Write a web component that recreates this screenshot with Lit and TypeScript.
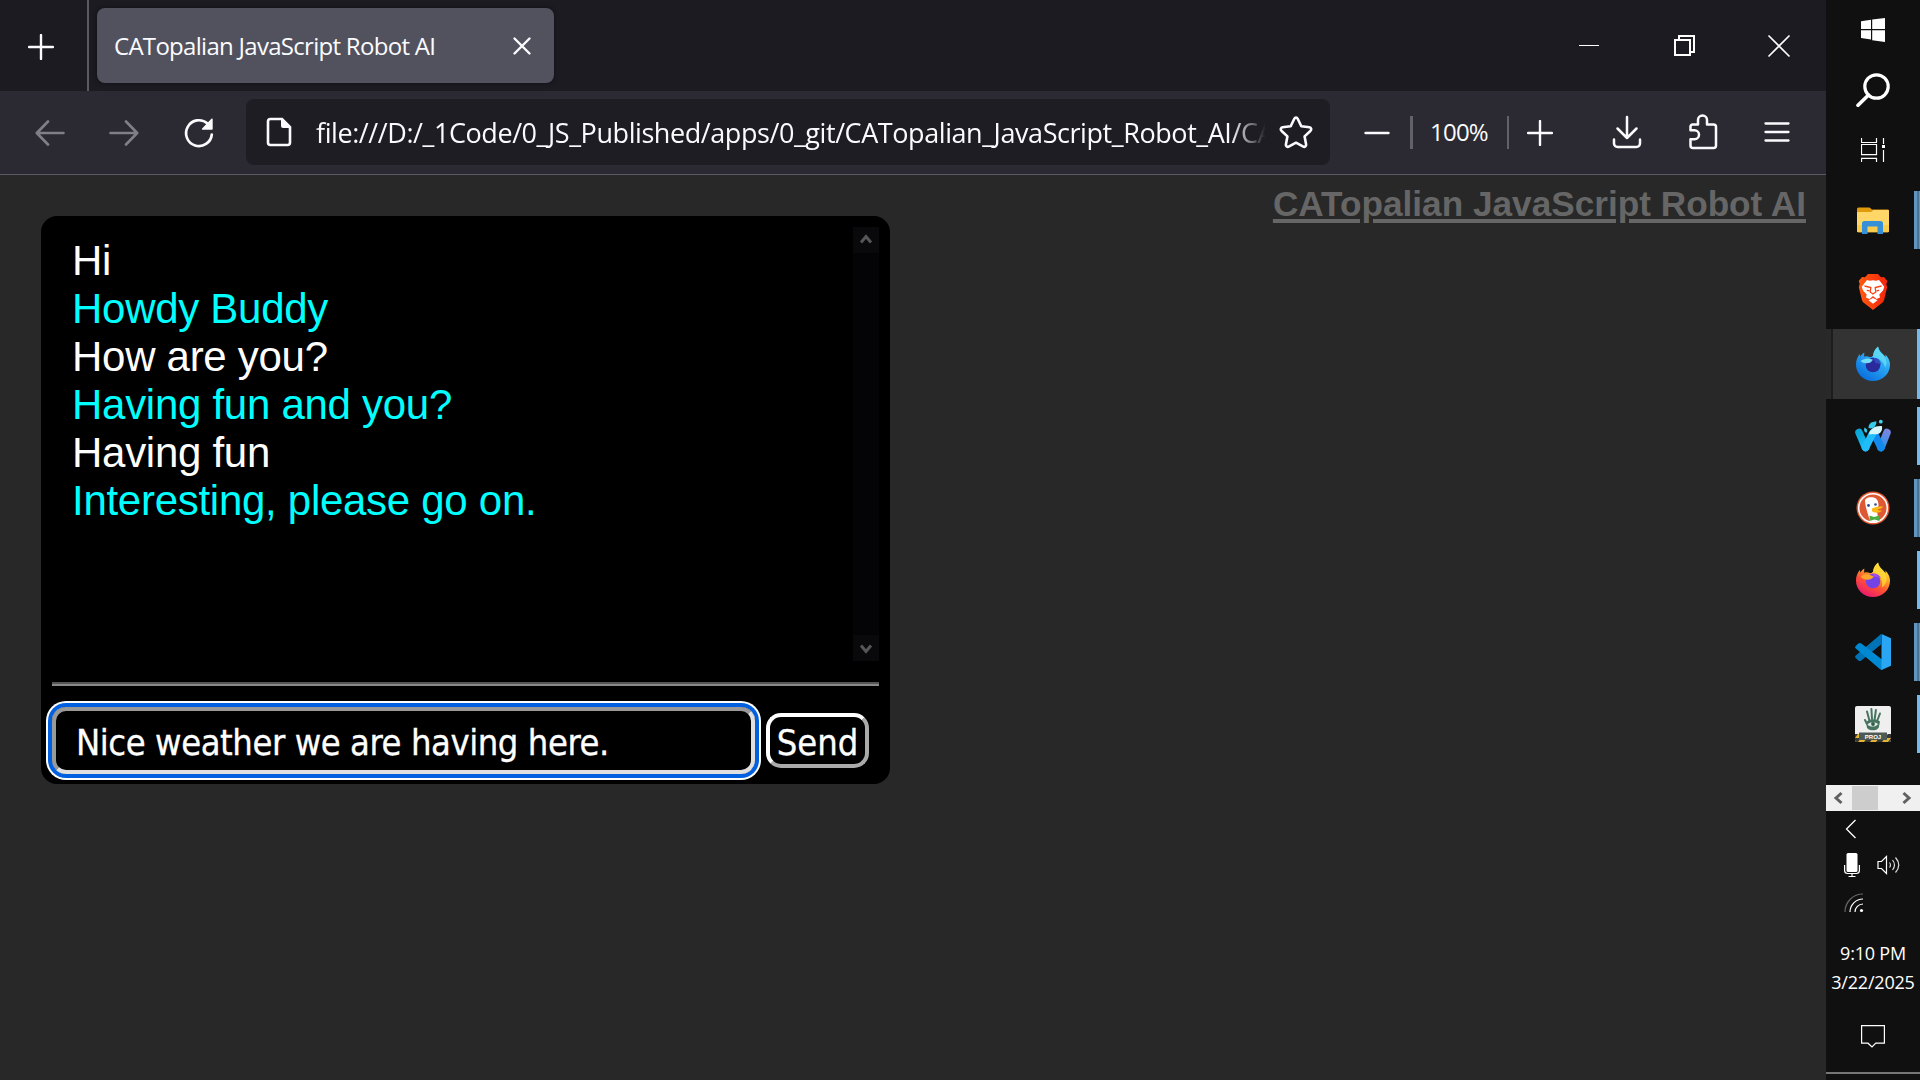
import { LitElement, html, css, svg, nothing, TemplateResult } from "lit";
import { customElement, property } from "lit/decorators.js";
import { classMap } from "lit/directives/class-map.js";

const icon = (w: number, h: number, body: TemplateResult) =>
  html`<svg width=${w} height=${h} viewBox="0 0 ${w} ${h}" fill="none">${body}</svg>`;

const plus = () => icon(26, 26, svg`<path d="M13 1v24M1 13h24" stroke="#fbfbfe" stroke-width="2.4" stroke-linecap="round"/>`);
const backArrow = () => icon(30, 26, svg`<path d="M28.5 13H2M13 1.5 1.8 13 13 24.5" stroke="#807f87" stroke-width="2.6" stroke-linecap="round" stroke-linejoin="round"/>`);
const forwardArrow = () => icon(30, 26, svg`<path d="M1.500 13H28M17 1.500 28.200 13 17 24.500" stroke="#807f87" stroke-width="2.600" stroke-linecap="round" stroke-linejoin="round"/>`);
const reload = () => icon(32, 32, svg`<path d="M24.500 6.500A12.900 12.900 0 1 0 28.800 17.500" stroke="#fbfbfe" stroke-width="2.700" stroke-linecap="round"/><path d="M29.700 2.300v9.700a.8.8 0 0 1-.8.8h-9.200c-.8 0-1.100-.8-.6-1.300l9.300-9.700c.500-.5 1.300-.2 1.300.5z" fill="#fbfbfe"/>`);
const page = () => icon(26, 30, svg`<path d="M4.500 2h11.500L24 10v15.500a2.500 2.500 0 0 1-2.500 2.500h-17A2.500 2.500 0 0 1 2 25.500v-21A2.500 2.500 0 0 1 4.500 2z" stroke="#fbfbfe" stroke-width="2.600"/><path d="M15 1l10 10h-8a2 2 0 0 1-2-2z" fill="#fbfbfe"/>`);
const star = () => icon(36, 34, svg`<path d="M16.300 3.700c.7-1.500 2.700-1.500 3.400 0l3.600 7.500 8.200 1.100c1.700.3 2.300 2.200 1.100 3.400l-6 5.700 1.500 8.200c.3 1.600-1.400 2.800-2.800 2l-7.300-3.900-7.300 3.900c-1.400.8-3.100-.4-2.800-2l1.500-8.200-6-5.700c-1.200-1.200-.6-3.100 1.100-3.400l8.200-1.100z" stroke="#fbfbfe" stroke-width="2.600" stroke-linejoin="round"/>`);
const minus = () => icon(26, 26, svg`<path d="M1.500 13h23" stroke="#fbfbfe" stroke-width="2.400" stroke-linecap="round"/>`);
const download = () => icon(30, 34, svg`<path d="M15 2v21M5.500 13.500 15 23l9.500-9.500M2 24.500v4a3.500 3.500 0 0 0 3.500 3.500h19a3.500 3.500 0 0 0 3.500-3.500v-4" stroke="#fbfbfe" stroke-width="2.500" stroke-linecap="round" stroke-linejoin="round"/>`);
const puzzle = () => icon(30, 36, svg`<path d="M2.500 16.300v-3.800a2 2 0 0 1 2-2h5.500v-4.500a4.500 4.500 0 0 1 9 0v4.500h6.500a2.500 2.500 0 0 1 2.500 2.500v18.500a2.500 2.500 0 0 1-2.500 2.500H5a2.500 2.500 0 0 1-2.500-2.500v-6.200h4a4.500 4.500 0 0 0 0-9z" stroke="#fbfbfe" stroke-width="2.500" stroke-linejoin="round"/>`);
const menu = () => icon(26, 22, svg`<path d="M1.500 2.500h23M1.500 11h23M1.500 19.500h23" stroke="#fbfbfe" stroke-width="2.300" stroke-linecap="round"/>`);
const tabClose = () => icon(20, 20, svg`<path d="M2.500 2.500l15 15M17.500 2.500l-15 15" stroke="#fbfbfe" stroke-width="2.400" stroke-linecap="round"/>`);
const winMin = () => icon(24, 24, svg`<path d="M2 11.500h20" stroke="#fff" stroke-width="1"/>`);
const winRestore = () => icon(24, 24, svg`<path d="M7 6V2h15v16h-3.500M3 6h15v15H3z" stroke="#fff" stroke-width="2"/>`);
const winClose = () => icon(24, 24, svg`<path d="M1.500 1.500l21 21M22.500 1.500l-21 21" stroke="#fff" stroke-width="1.600"/>`);

const windowsLogo = () => icon(24, 24, svg`<path d="M0 3.300l10-1.500V11H0zM11.200 1.600 24 0v11H11.200zM0 12.200h10v9.400L0 20.100zM11.200 12.200H24V24l-12.800-1.700z" fill="#fff"/>`);
const search = () => icon(34, 34, svg`<circle cx="20.500" cy="13.500" r="11.700" stroke="#fff" stroke-width="3.200"/><path d="M12.500 22 2 32.300" stroke="#fff" stroke-width="3.600" stroke-linecap="round"/>`);
const taskView = () => icon(25, 24, svg`<path d="M.5 0v4.500h15V0M.5 6.500h15v10.200H.5zM.5 24v-3.700h15V24M22.500 0v6M22.500 12v12" stroke="#fff" stroke-width="1.200"/><path d="M21 7h3v3h-3z" fill="#fff"/>`);

const explorer = () => icon(34, 30, svg`
  <path d="M1 4a1.500 1.500 0 0 1 1.500-1.500h11L16 4.500h16A1.200 1.200 0 0 1 33 6v20.500H1z" fill="#e19a0c"/>
  <path d="M1 7h14l2.500-2H32a1 1 0 0 1 1 1v20a1.300 1.300 0 0 1-1.300 1.300H2.300A1.300 1.300 0 0 1 1 26z" fill="#ffd768"/>
  <path d="M1 20h32v6a1.300 1.300 0 0 1-1.300 1.300H2.300A1.300 1.300 0 0 1 1 26z" fill="#fac640" opacity=".7"/>
  <path d="M6 29V18.500A2.500 2.500 0 0 1 8.500 16h16a2.500 2.500 0 0 1 2.500 2.500V29h-5.500v-7.500h-10V29z" fill="#3690d8"/>`);

const brave = () => icon(32, 38, svg`
  <defs><linearGradient id="br" x1="0" x2="1"><stop offset="0" stop-color="#ff5b10"/><stop offset="1" stop-color="#f6230b"/></linearGradient></defs>
  <path d="M11 1h10l3 3.300 3-.3 3.300 4-1 3 .9 3-3 12.500c-.4 1.500-1 2.500-2 3.300L16 37l-9.200-7.200c-1-.8-1.600-1.800-2-3.300L1.800 14l.9-3-1-3L5 4l3 .3z" fill="url(#br)"/>
  <path d="M10 7l3 .8 3-.5 3 .5 3-.8 5.300 6.800-1.300 3.700-3.700 4 .7 3-3.500 1.500L16 23l-3.500 3-3.500-1.500.7-3-3.700-4-1.300-3.700z" fill="#fff"/>
  <path d="M7.500 13l6.300 1.500-.6 4.500L16 21l2.800-2-.6-4.500 6.300-1.500" stroke="#f84214" stroke-width="1.300"/>
  <path d="M9.800 17.300l2.700.6M22.200 17.300l-2.700.6" stroke="#f84214" stroke-width="1.200"/>
  <path d="M11.500 27.300 16 25l4.500 2.300L16 30.800z" fill="#fff"/>`);

const foxBody = "M18 35C8.500 35 1 27.800 1 18.500c0-4.500 1.700-8 3.800-10.500l.4 2.500C6.500 8.600 8 7.400 9.300 6.500l-.2 4.300c2-.8 4-.5 5.600.3 2-.3 3-.2 3.300-.6C18 6.500 19.900 3.100 23.100.5c.5 3.500 2.400 5.300 5 7.700l2.500 3-.2-2.700C33.600 11.800 35 15 35 18.500 35 28 27.500 35 18 35z";
const firefoxDev = () => icon(36, 36, svg`
  <defs><linearGradient id="fd" x1="1" y1="0" x2=".3" y2="1"><stop offset="0" stop-color="#70e8f8"/><stop offset=".45" stop-color="#2ca9f5"/><stop offset="1" stop-color="#096fdc"/></linearGradient></defs>
  <path d=${foxBody} fill="url(#fd)"/>
  <path d="M23 .8c.5 3.800 2.800 6 5.200 8.200 3.500 3.300 4.300 8.800 2 12.800C29 16 25 12.500 18 11 18 6.500 20 3 23 .8z" fill="#62dcf3" opacity=".8"/>
  <circle cx="18" cy="19" r="7.300" fill="#292a9c"/>
  <path d="M5.500 15c3.800-3 8-3.300 12.500-1.200l-2.500 2.700C12.800 17.500 8 17.700 5.500 15z" fill="#74ddf8"/>
  <path d="M18 12.200c4-1 8 2 8 6.800-2-1.700-3.200-1.600-5.200-1.700z" fill="#324bbd"/>`);
const firefox = () => icon(36, 36, svg`
  <defs><linearGradient id="fx" x1=".85" y1="0" x2=".3" y2="1"><stop offset="0" stop-color="#fff044"/><stop offset=".35" stop-color="#ffae24"/><stop offset=".65" stop-color="#ff5034"/><stop offset="1" stop-color="#e81774"/></linearGradient></defs>
  <path d=${foxBody} fill="url(#fx)"/>
  <path d="M23 .8c.5 3.800 2.800 6 5.200 8.200 4.800 4.800 4.800 12-1.200 16.500C28 18 25 12 18 11 18 6.500 20 3 23 .8z" fill="#ffdc3a" opacity=".75"/>
  <circle cx="18" cy="19" r="7.300" fill="#7542e5"/>
  <path d="M5.500 14.500c4-3 8-3 11.500-.8l2 1-3 2.300C12.300 18.500 8.500 18 5.500 14.500z" fill="#ffa52c"/>
  <path d="M17 11.500c4-.5 7 .5 9 4.500-3-1.500-5.500-1.300-7.500-1.200z" fill="#a44ce7"/>`);

const waterfox = () => icon(36, 34, svg`
  <defs>
    <linearGradient id="wa" gradientUnits="userSpaceOnUse" x1="2" y1="12" x2="12" y2="31"><stop offset="0" stop-color="#0aa5d5"/><stop offset="1" stop-color="#1ac4ff"/></linearGradient>
    <linearGradient id="wb" gradientUnits="userSpaceOnUse" x1="33" y1="12" x2="25" y2="31"><stop offset="0" stop-color="#7b85df"/><stop offset="1" stop-color="#1797ef"/></linearGradient>
  </defs>
  <path d="M32 13.500 26 28.500" stroke="url(#wb)" stroke-width="7.500" stroke-linecap="round"/>
  <path d="M19.500 15l6.500 13.500" stroke="#1289ed" stroke-width="7.500" stroke-linecap="round"/>
  <path d="M4 13.500 10.500 28.500" stroke="url(#wa)" stroke-width="7.500" stroke-linecap="round"/>
  <path d="M10.500 28.500l7-14" stroke="#21bdfb" stroke-width="7.500" stroke-linecap="round"/>
  <path d="M14 15.500c1-5.500 6-9 13-8.300 1 6-3.500 9.300-9 7.800z" fill="#d5f7fb"/>
  <path d="M13.500 9c0-4.500 3-6.500 8-6.500-.2 5-3.500 8-8 6.500z" fill="#35cbeb"/>
  <circle cx="25.800" cy="2.700" r="1.900" fill="#42d5ed"/><path d="M9.500 8.500c2.300 1 3.500 3 2 5.200-2.300-.2-3-2.500-2-5.200z" fill="#38cce9"/>`);

const duck = () => icon(34, 34, svg`
  <circle cx="17" cy="17" r="16.500" fill="#de5833"/><circle cx="17" cy="17" r="14.300" stroke="#fff" stroke-width="1.500"/>
  <path d="M9 9c1.500-2.500 4-3.200 6-2.700 4.500-.3 7.700 2.500 7.500 8.200l-1.500 5.500 1.500 10A14 14 0 0 1 14 30.500c-2-8-5-15-5-21.500z" fill="#fff"/>
  <path d="M16 17.500c3-2 7-1.800 11-2.300-1 2.400-3.500 3-6 3.300 2 1.300 3.500.8 5 1.300-2 2.300-8 2.500-10 .5z" fill="#fdb913"/>
  <circle cx="12.500" cy="14.500" r="1.400" fill="#2d4f8e"/><circle cx="19.500" cy="13.500" r="1.300" fill="#2d4f8e"/>
  <path d="M13.500 24.500l4.500 1.600 5.500-1.700v5.600l-5-1.600-5 1.600z" fill="#4cae42"/>`);

const vscode = () => icon(36, 36, svg`
  <path d="M26 0v10.500L6.300 26.500a2.500 2.500 0 0 1-3 0L.8 24a1.800 1.800 0 0 1 0-2.600z" fill="#0073b6"/>
  <path d="M.8 14.600a1.800 1.800 0 0 1 0-2.600l2.500-2.400a2.500 2.500 0 0 1 3 0L27 25.500V36c-1 0-1.500-.5-2.500-1.300z" fill="#0089d3"/>
  <path d="M26.500 0 36 4.200v27.600L26.500 36z" fill="#2aa6f2"/>`);

const viewer = () => icon(36, 36, svg`
  <defs><pattern id="hz" width="12" height="8" patternUnits="userSpaceOnUse"><rect width="12" height="8" fill="#353735"/><path d="M0 8 6 0h6L6 8z" fill="#e5b435"/></pattern></defs>
  <rect width="36" height="36" rx="2" fill="#eeefee"/><path d="M0 28h36v6a2 2 0 0 1-2 2H2a2 2 0 0 1-2-2z" fill="url(#hz)"/>
  <path d="M4 26.500h28v7.500H4z" fill="#4d5955"/>
  <path d="M14.300 14 12 5.500M17 13l-.6-10M19.700 13l1.200-9M22.300 14.500 25 7.500M12 18l-2-4" stroke="#47745f" stroke-width="2" stroke-linecap="round"/>
  <path d="M11 16.500c2-4 10-4.500 14-1l-1.300 6.300c-2 3.300-9.500 3.500-11.700 0z" fill="#47745f"/><path d="M12.500 18.500c2.500-3 8-3 10.500-.3-2.500 3-8 3.200-10.500.3z" fill="#e1ebe5"/><circle cx="18" cy="18" r="1.900" fill="#315e4a"/>
  <text x="18" y="32.500" text-anchor="middle" font-family="Liberation Sans, sans-serif" font-weight="700" font-size="6" fill="#fff">PROJ</text>`);

const chevron = () => icon(12, 20, svg`<path d="M10.500 1 1.500 10l9 9" stroke="#fff" stroke-width="1.300"/>`);
const mic = () => icon(16, 26, svg`<rect x="2.500" y="1" width="11" height="19" rx="1.500" fill="#fff"/><path d="M.6 13v5.500a3 3 0 0 0 3 3h8.800a3 3 0 0 0 3-3V13M8 21.500v3M4.500 24.500h7" stroke="#fff" stroke-width="1.200"/>`);
const speaker = () => icon(24, 20, svg`<path d="M1 6.500h3.500L9.500 1.500v17l-5-5H1z" stroke="#fff" stroke-width="1.200"/><path d="M12.500 7.500q2 2.500 0 5M15.500 5q4 5 0 10M18.500 2.500q6.500 7.500 0 15" stroke="#ddd" stroke-width="1.200"/>`);
const wifi = () => icon(20, 20, svg`<path d="M1 19A18 18 0 0 1 19 1" stroke="#666" stroke-width="1.200"/><path d="M6 19A13 13 0 0 1 19 6M11 19a8 8 0 0 1 8-8" stroke="#fff" stroke-width="1.200"/><circle cx="17.500" cy="17.500" r="1.600" fill="#fff"/>`);
const notice = () => icon(24, 26, svg`<path d="M.6 1.600h22.800v17.600h-8.600L11 23l-4-3.800H.6z" stroke="#fff" stroke-width="1.200"/>`);
const scrollChevron = (d: string, w: number, h: number, color: string) => icon(w, h, svg`<path d=${d} stroke=${color} stroke-width="3"/>`);

@customElement("task-slot")
class TaskSlot extends LitElement {
  static styles = css`
    :host { display: flow-root; height: 72px; }
    .slot { position: relative; height: 72px; display: flex; align-items: center; justify-content: center; }
    .active { height: 70px; margin: 1px 0; background: #333; box-shadow: inset 5px 0 #292929, inset 7px 0 #1d1d1d; }
    .bar { position: absolute; right: 0; top: 7px; height: 58px; width: 3px; background: #76b9ed; }
    .stack { width: 6px; background: linear-gradient(90deg, #6196c1 3px, #4a7295 3px, #4a7295 5px, #6196c1 5px); }
    .full { top: 0; height: 70px; }
    svg { display: block; }
  `;
  @property({ attribute: false }) glyph: TemplateResult | undefined;
  @property() windows = "none";
  render() {
    const active = this.windows === "active";
    return html`<div class=${classMap({ slot: true, active })}>${this.glyph}
      ${this.windows === "none" ? nothing : html`<span class=${classMap({ bar: true, stack: this.windows === "many", full: active })}></span>`}
    </div>`;
  }
}

@customElement("app-root")
class AppRoot extends LitElement {
  static styles = css`
    :host { display: block; }
    * { box-sizing: border-box; }
    svg { display: block; flex: none; }
    .screen { width: 1920px; height: 1080px; display: flex; overflow: hidden; background: #282828; font-family: "Open Sans", "Noto Sans", sans-serif; color: #fbfbfe; }
    .browser { width: 1826px; display: flex; flex-direction: column; }
    .tabs { height: 91px; background: #1c1b22; display: flex; align-items: center; }
    .newtab { width: 89px; height: 91px; border-right: 2px solid #5b5a63; display: flex; align-items: center; padding: 2px 0 0 28px; }
    .tab { margin: 0 0 0 8px; width: 457px; height: 75px; border-radius: 8px; background: #52525e; box-shadow: 0 0 5px rgba(0,0,0,.45); display: flex; align-items: center; justify-content: space-between; padding: 0 22px 0 17px; }
    .tabname { font-size: 24px; letter-spacing: -0.71px; white-space: nowrap; }
    .wincontrols { margin-left: auto; display: flex; gap: 71px; padding-right: 35px; }
    .toolbar { height: 84px; background: #2b2a33; border-bottom: 1px solid #5b5b66; display: flex; align-items: center; }
    .nav { width: 246px; display: flex; align-items: center; padding-left: 35px; gap: 44px; }
    .address { width: 1084px; height: 66px; margin-bottom: 1px; border-radius: 8px; background: #1e1d24; display: flex; align-items: center; padding: 0 16px 0 20px; }
    .url { margin-left: 24px; width: 950px; font-size: 27px; letter-spacing: -0.43px; white-space: nowrap; overflow: hidden; -webkit-mask-image: linear-gradient(90deg, #000 915px, transparent 950px); mask-image: linear-gradient(90deg, #000 915px, transparent 950px); }
    .star { margin-left: 13px; }
    .zoom { display: flex; align-items: center; padding-left: 34px; }
    .rule { width: 2px; height: 33px; background: #62616b; }
    .rule.first { width: 3px; margin-left: 20px; }
    .rule.last { margin-right: 18px; }
    .percent { width: 94px; padding: 0 2px 3px 0; text-align: center; font-size: 24px; letter-spacing: -0.8px; }
    .tools { display: flex; align-items: center; padding: 0 0 1px 59px; gap: 46px; }
    .page { flex: 1; display: flex; justify-content: space-between; align-items: flex-start; padding: 0 20px 0 41px; }
    .heading { margin-top: 8px; font: bold 35.2px/42px "Liberation Sans", Arial, sans-serif; color: #666; text-decoration: underline; text-decoration-thickness: 4px; text-underline-offset: 3px; white-space: nowrap; }
    .chat { margin-top: 41px; width: 849px; height: 568px; border-radius: 16px; background: #000; padding: 11px; }
    .log { height: 434px; display: flex; justify-content: space-between; }
    .lines { padding: 10px 0 0 20px; font: 42px/48px "Liberation Sans", Arial, sans-serif; letter-spacing: -0.28px; color: #fff; }
    .robot { color: #0ff; }
    .scroll { width: 26px; background: #040406; display: flex; flex-direction: column; justify-content: space-between; }
    .step { height: 26px; background: #09090b; display: flex; align-items: center; justify-content: center; }
    .divider { margin-top: 21px; height: 4px; background: #898989; border-top: 2px solid #555; }
    .entry { margin-top: 21px; display: flex; align-items: center; gap: 11px; font-family: "DejaVu Sans Condensed", "DejaVu Sans", sans-serif; font-stretch: condensed; font-size: 36px; color: #fff; -webkit-text-stroke: 0.3px #fff; }
    .field { width: 703px; height: 67px; border: 4px solid; border-color: #999 #e0e0e0 #e0e0e0 #999; border-radius: 14px; box-shadow: 0 0 0 4px #0060df, 0 0 0 6px #fff; padding: 0 0 0 20px; line-height: 64px; letter-spacing: -0.43px; white-space: nowrap; }
    .send { width: 103px; height: 55px; border: 4px solid; border-color: #fff #aaa #aaa #fff; border-radius: 15px; text-align: center; line-height: 52px; }
    .taskbar { width: 94px; background: #101010; display: flex; flex-direction: column; }
    .sys { height: 60px; flex: none; display: flex; align-items: center; justify-content: center; }
    .apps { margin-top: 4px; flex: none; }
    .hscroll { margin-top: 25px; height: 26px; flex: none; background: #f0f0f0; display: flex; align-items: center; }
    .hstep { width: 26px; display: flex; justify-content: center; }
    .thumb { width: 26px; height: 24px; background: #cdcdcd; }
    .hstep.end { margin-left: 15px; }
    .tray { padding: 8px 0 0 18px; display: flex; flex-direction: column; flex: none; }
    .tray > svg:first-child { margin-left: 1px; }
    .trayrow { display: flex; align-items: center; gap: 17px; margin: 13px 0 15px; }
    .clock { margin-top: 26px; text-align: center; font-size: 18px; line-height: 29px; letter-spacing: -0.2px; color: #fff; }
    .notice { margin: 27px 0 0 35px; }
    .edge { margin-top: auto; margin-bottom: 6px; height: 2px; background: #767676; }
  `;

  private lines = [
    { text: "Hi", robot: false },
    { text: "Howdy Buddy", robot: true },
    { text: "How are you?", robot: false },
    { text: "Having fun and you?", robot: true },
    { text: "Having fun", robot: false },
    { text: "Interesting, please go on.", robot: true },
  ];

  private apps = [
    { glyph: explorer(), windows: "many" },
    { glyph: brave(), windows: "none" },
    { glyph: firefoxDev(), windows: "active" },
    { glyph: waterfox(), windows: "one" },
    { glyph: duck(), windows: "many" },
    { glyph: firefox(), windows: "one" },
    { glyph: vscode(), windows: "many" },
    { glyph: viewer(), windows: "one" },
  ];

  render() {
    return html`<div class="screen">
      <main class="browser">
        <div class="tabs">
          <div class="newtab">${plus()}</div>
          <div class="tab"><span class="tabname">CATopalian JavaScript Robot AI</span>${tabClose()}</div>
          <div class="wincontrols">${winMin()}${winRestore()}${winClose()}</div>
        </div>
        <div class="toolbar">
          <div class="nav">${backArrow()}${forwardArrow()}${reload()}</div>
          <div class="address">${page()}<span class="url">file:///D:/_1Code/0_JS_Published/apps/0_git/CATopalian_JavaScript_Robot_AI/CA</span><span class="star">${star()}</span></div>
          <div class="zoom">${minus()}<span class="rule first"></span><span class="percent">100%</span><span class="rule last"></span>${plus()}</div>
          <div class="tools">${download()}${puzzle()}${menu()}</div>
        </div>
        <div class="page">
          <section class="chat">
            <div class="log">
              <div class="lines">${this.lines.map((l) => html`<div class=${classMap({ robot: l.robot })}>${l.text}</div>`)}</div>
              <div class="scroll">
                <div class="step">${scrollChevron("M2 9.500 7 3.500l5 6", 14, 14, "#55555a")}</div>
                <div class="step">${scrollChevron("M2 4.500 7 10.500l5-6", 14, 14, "#55555a")}</div>
              </div>
            </div>
            <div class="divider"></div>
            <div class="entry">
              <div class="field"><span>Nice weather we are having here.</span></div>
              <div class="send"><span>Send</span></div>
            </div>
          </section>
          <div class="heading">CATopalian JavaScript Robot AI</div>
        </div>
      </main>
      <aside class="taskbar">
        <div class="sys">${windowsLogo()}</div>
        <div class="sys">${search()}</div>
        <div class="sys">${taskView()}</div>
        <div class="apps">${this.apps.map((a) => html`<task-slot .glyph=${a.glyph} windows=${a.windows}></task-slot>`)}</div>
        <div class="hscroll"><span class="hstep">${scrollChevron("M9.500 2 4 7l5.500 5", 14, 14, "#606060")}</span><span class="thumb"></span><span class="hstep end">${scrollChevron("M4.500 2 10 7l-5.500 5", 14, 14, "#606060")}</span></div>
        <div class="tray">
          ${chevron()}
          <div class="trayrow">${mic()}${speaker()}</div>
          ${wifi()}
        </div>
        <div class="clock"><div>9:10 PM</div><div>3/22/2025</div></div>
        <div class="notice">${notice()}</div>
        <div class="edge"></div>
      </aside>
    </div>`;
  }
}
